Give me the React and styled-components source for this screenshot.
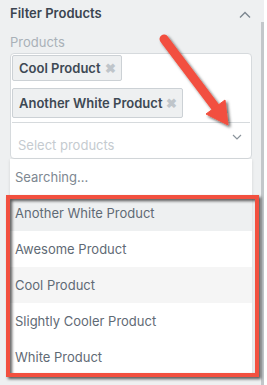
import React from "react";
import styled, { createGlobalStyle } from "styled-components";

const Global = createGlobalStyle`
  html, body { margin: 0; padding: 0; background: #ffffff; }
  body { font-family: Inter, "Noto Sans", sans-serif; }
`;

const Page = styled.div`
  position: relative;
  width: 267px;
  height: 385px;
  overflow: hidden;
  display: flex;
`;

const Panel = styled.div`
  width: 264px;
  height: 385px;
  background: #eef0f1;
  display: flex;
`;

const Content = styled.div`
  flex: 1;
  padding: 0 9px 0 10px;
  display: flex;
  flex-direction: column;
`;

const ScrollTrack = styled.div`
  width: 3px;
  padding-top: 22px;
  display: flex;
`;

const ScrollThumb = styled.div`
  flex: 1;
  background: #c3c7ca;
`;

const Header = styled.div`
  height: 25px;
  display: flex;
  align-items: center;
  justify-content: space-between;
`;

const Title = styled.div`
  font-size: 13px;
  font-weight: 600;
  color: #3b4550;
`;

const Label = styled.div`
  margin-top: 8px;
  font-size: 13px;
  color: #a9b1b8;
  height: 20px;
  line-height: 19px;
`;

const SelectBox = styled.div`
  width: 242px;
  box-sizing: border-box;
  border: 1px solid #d6dadd;
  border-radius: 4px;
  background: #fff;
  display: flex;
  flex-direction: column;
  padding: 1px 1px 0 1px;
`;

const Tags = styled.div`
  display: flex;
  flex-direction: column;
  align-items: flex-start;
  gap: 7px;
  padding-top: 0;
  padding-bottom: 4px;
  border-bottom: 1px solid #d6dadd;
`;

const Tag = styled.div`
  height: ${(p) => p.$h}px;
  box-sizing: border-box;
  display: flex;
  align-items: center;
  gap: 4px;
  padding: 0 5px 0 6px;
  background: #eef0f1;
  border: 1px solid #ccd1d5;
  border-radius: 2px;
  font-size: 13px;
  font-weight: 600;
  color: #3e4954;
`;

const Remove = styled.span`
  color: #bfc5ca;
  font-size: 13px;
  font-weight: 700;
`;

const SearchRow = styled.div`
  height: 35px;
  display: flex;
  justify-content: space-between;
  padding: 0 8px 0 6px;
`;

const Placeholder = styled.div`
  font-size: 13px;
  line-height: 16px;
  color: #c5cbd0;
  padding-top: 14px;
`;

const Caret = styled.div`
  padding-top: 10px;
  display: flex;
  align-items: flex-start;
`;

const Dropdown = styled.div`
  width: 242px;
  background: #fff;
  box-shadow: 0 1px 3px rgba(0, 0, 0, 0.12);
  display: flex;
  flex-direction: column;
`;

const Row = styled.div`
  height: 36px;
  flex-shrink: 0;
  display: flex;
  align-items: center;
  padding-left: 5px;
  font-size: 13px;
  color: ${(p) => (p.$muted ? "#7d8791" : "#5f6a75")};
  background: ${(p) => p.$bg || "#fff"};
`;

const Highlight = styled.div`
  position: absolute;
  left: 6px;
  top: 195px;
  width: 253px;
  height: 182px;
  box-sizing: border-box;
  border: 4px solid #f2503f;
  filter: drop-shadow(2px 2px 1.5px rgba(0, 0, 0, 0.65));
  pointer-events: none;
`;

const ArrowSvg = styled.svg`
  position: absolute;
  left: 0;
  top: 0;
  pointer-events: none;
`;

const options = [
  { label: "Another White Product", bg: "#eef0f1" },
  { label: "Awesome Product" },
  { label: "Cool Product", bg: "#f5f5f5" },
  { label: "Slightly Cooler Product" },
  { label: "White Product" },
];

export default function App() {
  return (
    <>
      <Global />
      <Page>
        <Panel>
          <Content>
            <Header>
              <Title>Filter Products</Title>
              <svg width="14" height="14" viewBox="0 0 14 14" style={{ marginTop: 5 }}>
                <path d="M2 9.5 L7 4.5 L12 9.5" fill="none" stroke="#7c868f" strokeWidth="1.4" />
              </svg>
            </Header>
            <Label>Products</Label>
            <SelectBox>
              <Tags>
                <Tag $h={26}>
                  Cool Product <Remove>✖</Remove>
                </Tag>
                <Tag $h={30}>
                  Another White Product <Remove>✖</Remove>
                </Tag>
              </Tags>
              <SearchRow>
                <Placeholder>Select products</Placeholder>
                <Caret>
                  <svg width="10" height="8" viewBox="0 0 10 8">
                    <path d="M1 2 L5 6 L9 2" fill="none" stroke="#8b949c" strokeWidth="1.2" />
                  </svg>
                </Caret>
              </SearchRow>
            </SelectBox>
            <Dropdown>
              <Row $muted>Searching...</Row>
              {options.map((o) => (
                <Row key={o.label} $bg={o.bg}>
                  {o.label}
                </Row>
              ))}
            </Dropdown>
          </Content>
          <ScrollTrack>
            <ScrollThumb />
          </ScrollTrack>
        </Panel>
        <Highlight />
        <ArrowSvg width="267" height="385" viewBox="0 0 267 385">
          <defs>
            <filter id="sh" x="-20%" y="-20%" width="160%" height="160%">
              <feDropShadow dx="2" dy="2" stdDeviation="1.5" floodColor="#000" floodOpacity="0.6" />
            </filter>
          </defs>
          <g filter="url(#sh)" fill="#f2503f" stroke="#f2503f">
            <line x1="164" y1="39" x2="216" y2="108" strokeWidth="9" strokeLinecap="round" />
            <polygon points="228,125 206,114 225,100" strokeWidth="1" strokeLinejoin="round" />
          </g>
        </ArrowSvg>
      </Page>
    </>
  );
}
